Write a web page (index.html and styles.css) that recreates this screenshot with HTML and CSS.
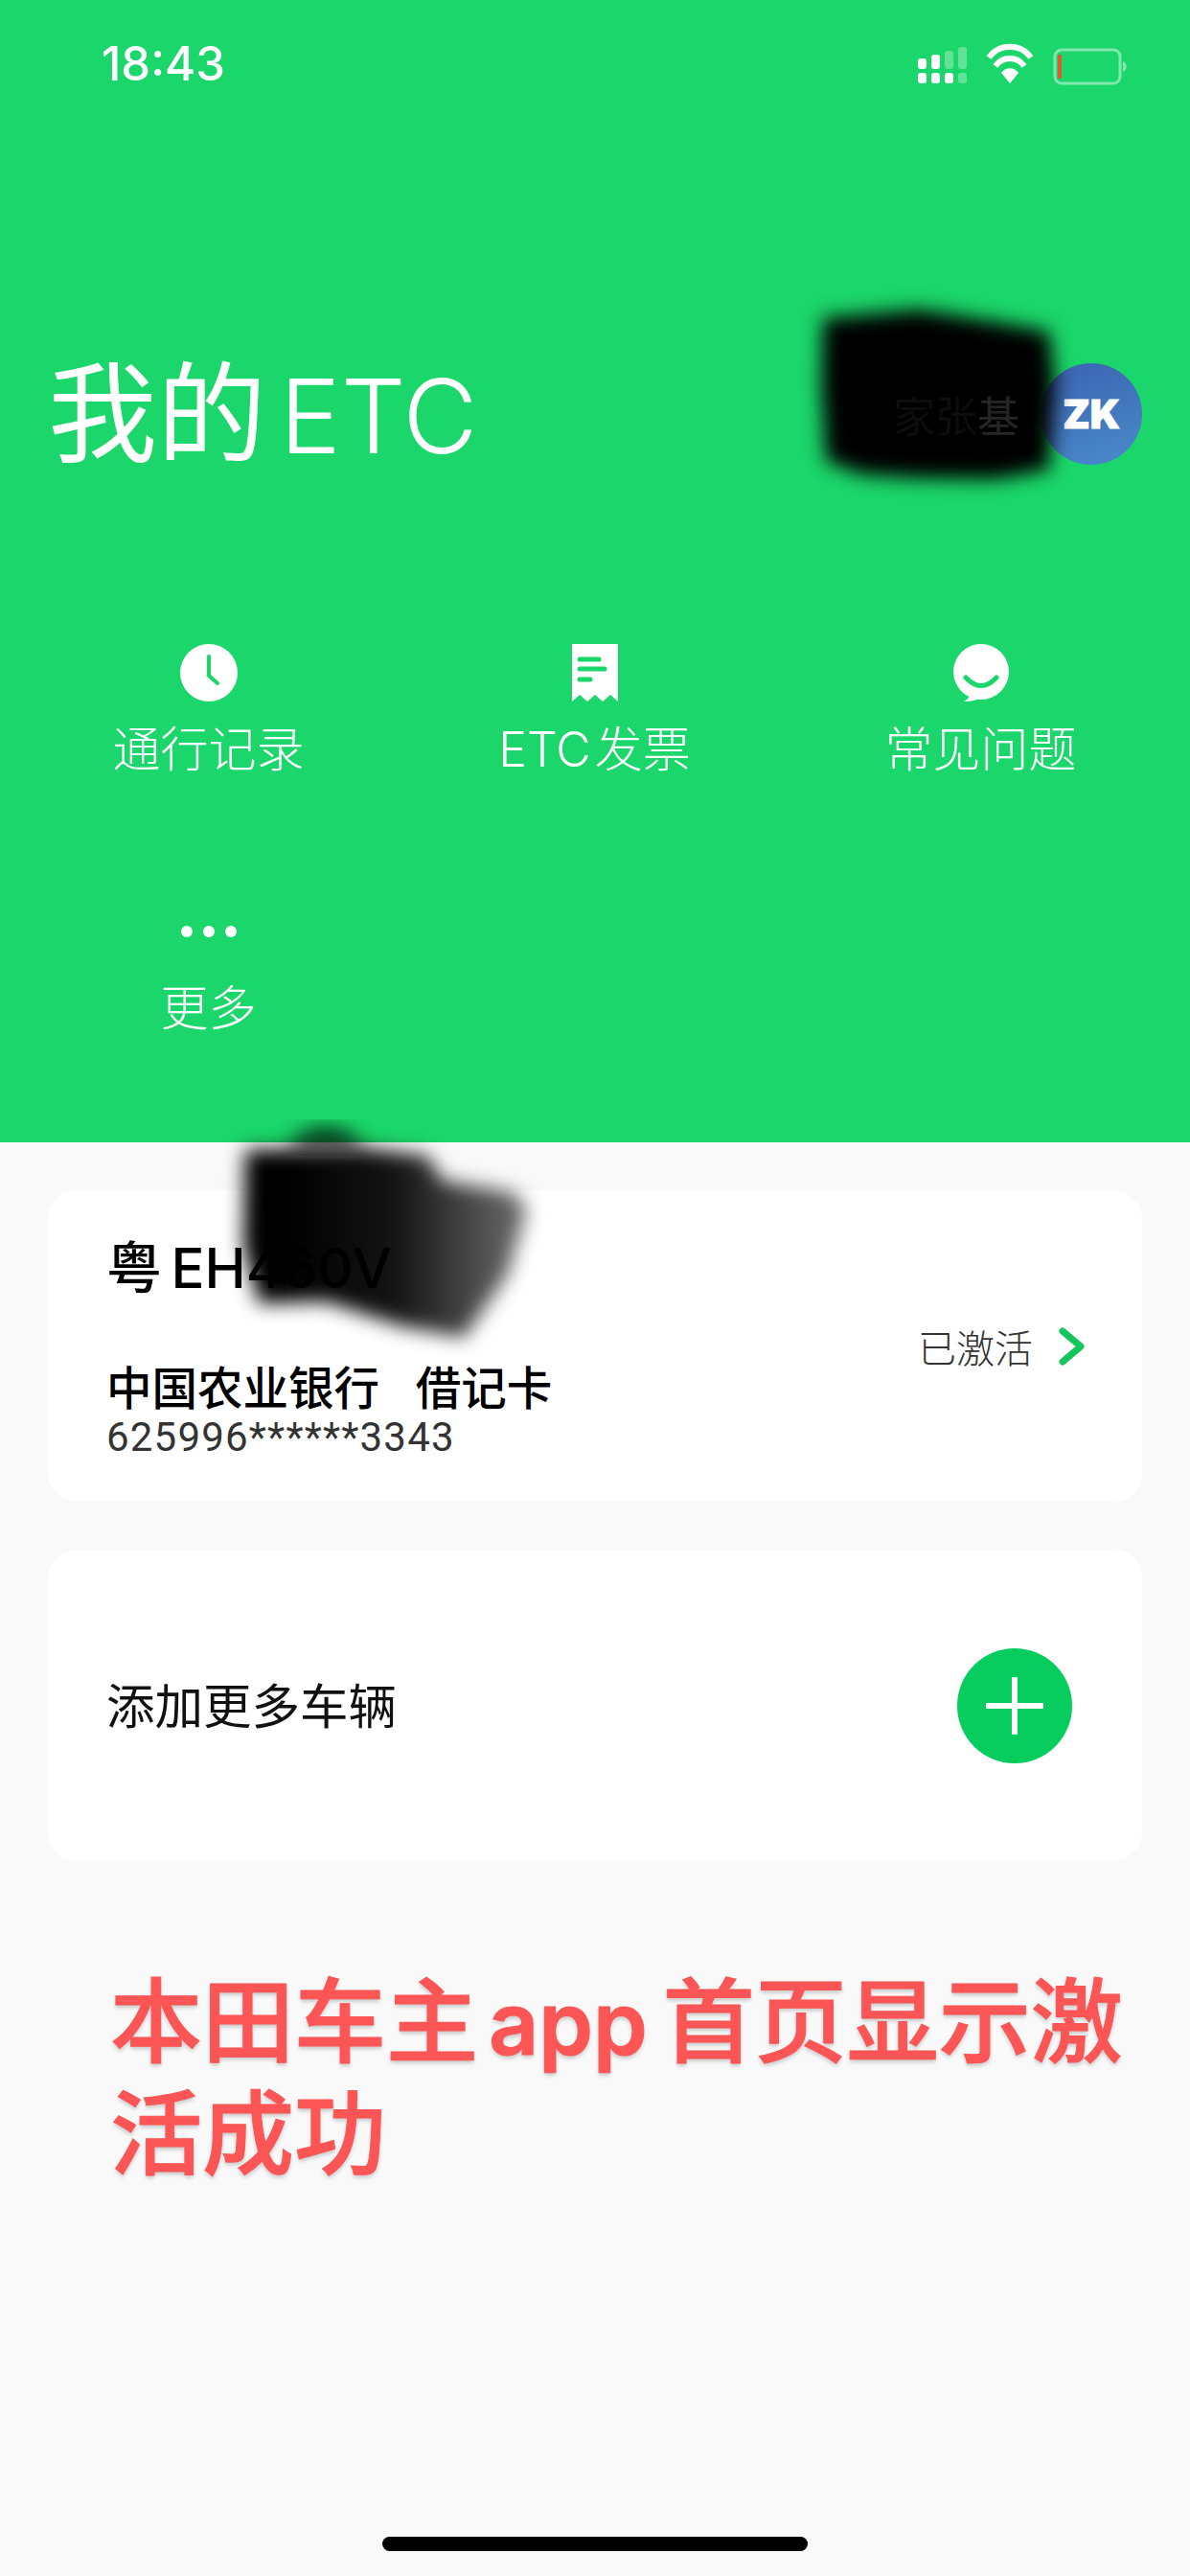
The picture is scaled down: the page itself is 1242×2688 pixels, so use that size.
FILE: index.html
```html
<!DOCTYPE html>
<html lang="zh-CN">
  <head>
    <meta charset="UTF-8" />
    <meta name="viewport" content="width=device-width, initial-scale=1.0" />
    <title>我的 ETC</title>
    <link rel="stylesheet" href="styles.css">
  </head>
  <body>
    <div class="page">
      <header class="hero">
        <div class="status-bar">
          <span class="time">18:43</span>
          <svg class="status-icons" width="228" height="44" viewBox="0 0 228 44">
            <g fill="#fff">
              <rect x="0" y="16" width="9" height="11" rx="3" />
              <rect x="14" y="12" width="9" height="15" rx="3" />
              <rect x="0" y="31" width="9" height="11" rx="3" />
              <rect x="14" y="31" width="9" height="11" rx="3" />
              <rect x="28" y="31" width="9" height="11" rx="3" />
            </g>
            <g fill="#fff" opacity=".3">
              <rect x="28" y="8" width="9" height="19" rx="3" />
              <rect x="42" y="4" width="9" height="23" rx="3" />
              <rect x="42" y="31" width="9" height="11" rx="3" />
            </g>
            <g fill="none" stroke="#fff" stroke-width="6">
              <path d="M74 15 a27 27 0 0 1 44 0" />
              <path d="M81 24 a18 18 0 0 1 30 0" />
            </g>
            <path d="M87 31 a11 11 0 0 1 18 0 l-9 11 z" fill="#fff" />
            <rect x="143" y="7" width="68" height="35" rx="7" fill="none" stroke="#fff" stroke-opacity=".45" stroke-width="3" />
            <rect x="146" y="12" width="4" height="25" rx="1" fill="#e4572e" />
            <path d="M214 19 a6 6 0 0 1 0 11 z" fill="#fff" fill-opacity=".45" />
          </svg>
        </div>

        <div class="title-row">
          <h1 class="title">我的 <span class="title-latin">ETC</span></h1>
          <div class="user">
            <span class="user-name"><span class="user-name-dim">家张</span>基</span>
            <span class="avatar">ZK</span>
          </div>
        </div>

        <nav class="menu">
          <a class="menu-item">
            <svg class="menu-icon" viewBox="0 0 60 60">
              <circle cx="30" cy="30" r="30" fill="#fff" />
              <path d="M30 13 V33 L39 41" fill="none" stroke="#1bd66a" stroke-width="4" stroke-linecap="round" stroke-linejoin="round" />
            </svg>
            <span>通行记录</span>
          </a>
          <a class="menu-item">
            <svg class="menu-icon" viewBox="0 0 60 60">
              <path d="M6 0 H54 V60 L46 53 L38 60 L30 53 L22 60 L14 53 L6 60 Z" fill="#fff" />
              <g stroke="#1bd66a" stroke-width="5" stroke-linecap="round">
                <path d="M14 16 H34" />
                <path d="M14 26 H40" />
                <path d="M14 37 H25" />
              </g>
            </svg>
            <span class="menu-mixed">ETC 发票</span>
          </a>
          <a class="menu-item">
            <svg class="menu-icon" viewBox="0 0 60 60">
              <circle cx="30" cy="29" r="29" fill="#fff" />
              <path d="M20 50 Q18 57 12 60 Q24 60 34 55 Z" fill="#fff" />
              <path d="M14 35 Q30 52 46 35" fill="none" stroke="#1bd66a" stroke-width="5" stroke-linecap="round" />
            </svg>
            <span>常见问题</span>
          </a>
          <a class="menu-item">
            <svg class="menu-icon" viewBox="0 0 60 60">
              <circle cx="7" cy="30" r="6" fill="#fff" />
              <circle cx="30" cy="30" r="6" fill="#fff" />
              <circle cx="53" cy="30" r="6" fill="#fff" />
            </svg>
            <span>更多</span>
          </a>
        </nav>
      </header>

      <main class="cards">
        <section class="card car-card">
          <div class="car-info">
            <div class="plate">粤 EH460V</div>
            <div class="bank">中国农业银行 借记卡</div>
            <div class="card-no">625996******3343</div>
          </div>
          <div class="car-state">
            <span>已激活</span>
            <svg width="30" height="42" viewBox="0 0 30 42">
              <path d="M5 5 L24 21 L5 37" fill="none" stroke="#14c45c" stroke-width="7" stroke-linecap="round" stroke-linejoin="round" />
            </svg>
          </div>
        </section>

        <section class="card add-card">
          <span class="add-label">添加更多车辆</span>
          <span class="add-btn">
            <svg width="60" height="60" viewBox="0 0 60 60">
              <path d="M30 1 V59 M1 30 H59" stroke="#fff" stroke-width="6" stroke-linecap="round" />
            </svg>
          </span>
        </section>
      </main>

      <p class="note">本田车主<span class="note-latin">app</span>首页显示激活成功</p>

      <div class="home-bar"></div>

      <!-- smudges that hide private details -->
      <svg class="smudges" width="1242" height="1420" viewBox="0 0 1242 1420">
        <defs>
          <filter id="soft" x="-20%" y="-20%" width="140%" height="140%" color-interpolation-filters="sRGB">
            <feGaussianBlur stdDeviation="10" />
          </filter>
          <linearGradient id="fade" gradientUnits="userSpaceOnUse" x1="300" y1="0" x2="550" y2="0">
            <stop offset="0" stop-color="#000" />
            <stop offset=".45" stop-color="#141414" />
            <stop offset="1" stop-color="#6e6e6e" />
          </linearGradient>
        </defs>
        <path filter="url(#soft)" d="M859 332 L960 323 L1040 336 L1095 346 L1101 400 L1095 490 L1040 500 L960 499 L900 495 L862 481 L857 400 Z" />
        <path filter="url(#soft)" opacity=".7" d="M300 1200 L312 1182 L340 1174 L368 1182 L380 1200 Z" />
        <path filter="url(#soft)" fill="url(#fade)" d="M256 1200 L380 1198 L446 1206 L462 1232 L536 1244 L550 1262 L530 1330 L484 1396 L420 1384 L340 1358 L270 1360 L254 1300 Z" />
      </svg>
    </div>
  </body>
</html>
```

FILE: styles.css
```css
* {
  box-sizing: border-box;
}
body {
  margin: 0;
  background-color: #f9f9f9;
  font-family: Inter, "Noto Sans CJK SC", sans-serif;
}
.page {
  position: relative;
  width: 1242px;
  height: 2688px;
  overflow: hidden;
}
.hero {
  height: 1192px;
  background-color: #1bd66a;
  color: #fff;
}
.status-bar {
  display: flex;
  justify-content: space-between;
  align-items: center;
  height: 133px;
  padding: 0 56px 0 106px;
  margin-bottom: 246px;
}
.status-bar .time {
  font-size: 49px;
  font-weight: 500;
}
.title-row {
  display: flex;
  justify-content: space-between;
  align-items: center;
  height: 106px;
  padding: 0 50px;
}
.title {
  margin: 0 0 18px;
  font-size: 114px;
  font-weight: 400;
  word-spacing: -18px;
}
.title-latin {
  font-size: 107px;
  font-weight: 300;
}
.user {
  display: flex;
  align-items: center;
  gap: 22px;
}
.user-name {
  position: relative;
  z-index: 2;
  font-size: 44px;
  color: #252525;
}
.user-name-dim {
  color: #0d0d0d;
}
.avatar {
  display: flex;
  justify-content: center;
  align-items: center;
  width: 106px;
  height: 106px;
  border-radius: 50%;
  background: linear-gradient(160deg, #3a62b0, #4a8ccb);
  font-size: 41px;
  font-weight: 900;
  -webkit-text-stroke: 1px #fff;
}
.menu {
  display: grid;
  grid-template-columns: repeat(3, 403px);
  grid-auto-rows: 140px;
  row-gap: 130px;
  padding-left: 16px;
  margin-top: 187px;
}
.menu-item {
  display: flex;
  flex-direction: column;
  align-items: center;
  gap: 20px;
  font-size: 50px;
  font-weight: 300;
  line-height: 60px;
}
.menu-mixed {
  word-spacing: -10px;
}
.menu-icon {
  width: 60px;
  height: 60px;
}
.cards {
  display: flex;
  flex-direction: column;
  gap: 50px;
  padding: 50px 50px 0;
}
.card {
  display: flex;
  justify-content: space-between;
  align-items: center;
  height: 325px;
  background-color: #fff;
  border-radius: 30px;
  padding-left: 61px;
}
.car-card {
  padding-right: 58px;
}
.plate {
  position: relative;
  z-index: 2;
  font-size: 58px;
  font-weight: 500;
  line-height: 70px;
  margin-bottom: 62px;
  word-spacing: -6px;
  color: #000;
}
.bank {
  font-size: 47.5px;
  font-weight: 500;
  line-height: 58px;
  word-spacing: 25px;
  color: #000;
}
.card-no {
  font-family: Roboto, sans-serif;
  font-size: 42px;
  line-height: 44px;
  letter-spacing: 1.2px;
  color: #333;
}
.car-state {
  display: flex;
  align-items: center;
  gap: 26px;
  font-size: 40px;
  font-weight: 300;
  color: #333;
}
.add-card {
  padding-right: 73px;
}
.add-label {
  font-size: 50.5px;
  font-weight: 400;
  line-height: 60px;
  margin-top: 2px;
  color: #111;
}
.add-btn {
  display: flex;
  justify-content: center;
  align-items: center;
  width: 120px;
  height: 120px;
  border-radius: 50%;
  background-color: #07cd5e;
}
.note {
  margin: 110px 40px 0 115px;
  font-size: 96px;
  font-weight: 500;
  line-height: 115px;
  color: #fb5555;
  -webkit-text-stroke: 1px #fb5555;
  text-shadow: 0 3px 4px rgba(0, 0, 0, 0.2);
}
.note-latin {
  margin: 0 16px 0 11px;
  font-size: 91px;
  font-weight: 600;
}
.home-bar {
  position: absolute;
  left: 399px;
  bottom: 26px;
  width: 444px;
  height: 15px;
  border-radius: 8px;
  background-color: #000;
}
.smudges {
  position: absolute;
  left: 0;
  top: 0;
  z-index: 1;
  pointer-events: none;
}
```
